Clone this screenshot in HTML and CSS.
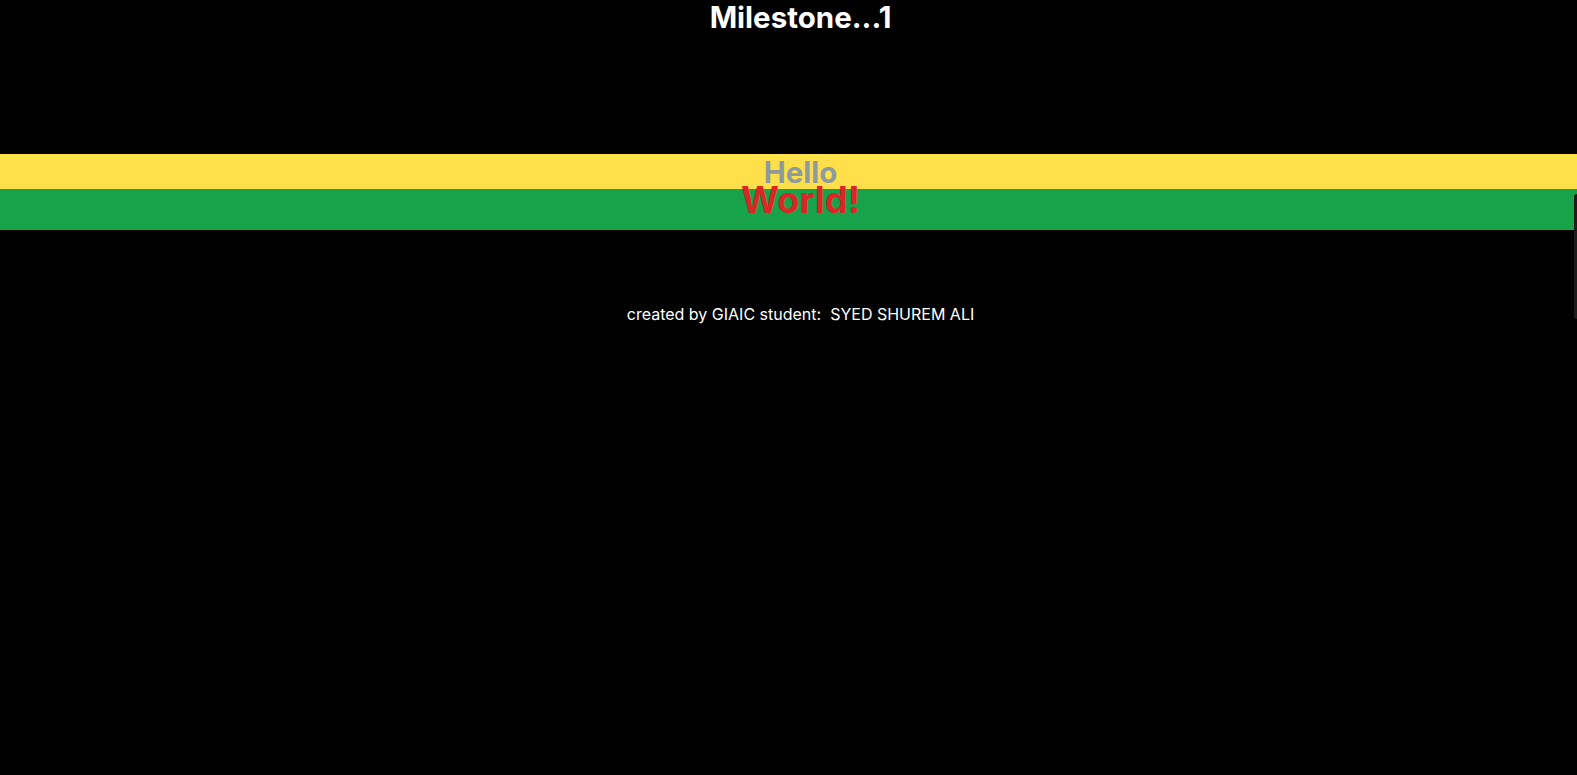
FILE: index.html
```html
<!DOCTYPE html>
<html>
<head>
<meta charset="utf-8">
<link rel="stylesheet" href="styles.css">
</head>
<body>
<div class="page">
  <h1 class="title">Milestone...1</h1>
  <div class="bands">
    <div class="band yellow"><span class="hello">Hello</span></div>
    <div class="band green"><span class="world">World!</span></div>
  </div>
  <p class="credit">created by GIAIC student:&nbsp; SYED SHUREM ALI</p>
</div>
<div class="side-widget"></div>
</body>
</html>
```
FILE: styles.css
```css
html, body {
  margin: 0;
  padding: 0;
  background: #000;
  height: 100%;
  overflow: hidden;
}
body {
  font-family: Inter, "Liberation Sans", sans-serif;
  color: #fff;
}
.page {
  display: flex;
  flex-direction: column;
}
.title {
  margin: 0;
  padding-left: 24px;
  text-align: center;
  font-size: 29.5px;
  font-weight: 700;
  line-height: 34px;
}
.bands {
  margin-top: 120px;
  display: flex;
  flex-direction: column;
}
.band {
  text-align: center;
  padding-left: 24px;
  font-weight: 700;
}
.yellow {
  background: #ffdf4a;
  height: 35px;
  line-height: 36px;
}
.green {
  background: #18a24a;
  height: 41px;
  line-height: 22px;
}
.hello {
  color: #8e9b9e;
  font-size: 29.5px;
}
.world {
  color: #dc2626;
  font-size: 36.5px;
}
.credit {
  margin: 74px 0 0;
  padding-left: 24px;
  text-align: center;
  font-size: 16px;
  line-height: 20px;
}
.side-widget {
  position: absolute;
  right: 0;
  top: 194px;
  width: 3px;
  height: 125px;
  background: #1c1c1c;
  border-radius: 3px 0 0 3px;
}
```
